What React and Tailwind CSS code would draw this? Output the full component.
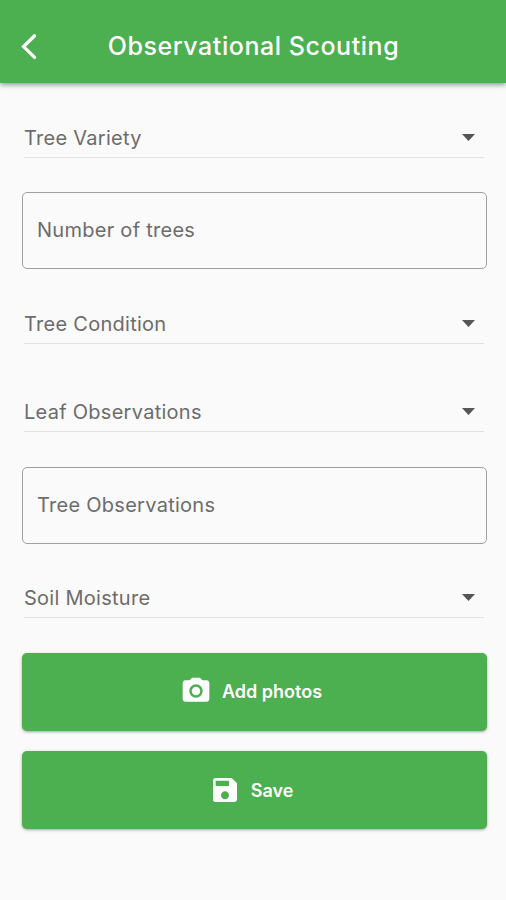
import { MdPhotoCamera, MdSave } from "react-icons/md";

function SelectField({ label, className = "" }) {
  return (
    <button
      type="button"
      className={`mr-[3px] ml-0.5 flex h-10 items-center justify-between border-b border-[#e2e2e2] pr-[9px] text-left ${className}`}
    >
      <span className="text-[20px] leading-6 tracking-[0.27px] whitespace-nowrap">{label}</span>
      <svg width="13" height="7" viewBox="0 0 13 7" className="fill-[#555555]">
        <path d="M0 0h13L6.5 7z" />
      </svg>
    </button>
  );
}

function TextField({ label, className = "" }) {
  return (
    <div
      className={`flex h-[77px] items-center rounded-[5px] border border-[#a0a0a0] px-[14px] pb-px ${className}`}
    >
      <span className="text-[20px] leading-6 tracking-[0.27px] whitespace-nowrap">{label}</span>
    </div>
  );
}

function ActionButton({ icon: Icon, label, className = "" }) {
  return (
    <button
      type="button"
      className={`flex h-[78px] items-center justify-center gap-[10px] rounded-[5px] bg-[#4caf50] pr-[7px] text-white shadow-[0_1px_3px_rgba(0,0,0,0.35)] ${className}`}
    >
      <Icon size={32} />
      <span className="text-[18px] font-semibold whitespace-nowrap">{label}</span>
    </button>
  );
}

export default function App() {
  return (
    <div className="flex h-[900px] flex-col bg-[#fafafa] font-['Inter',sans-serif] text-[#6c6c6c]">
      <header className="grid h-[83px] shrink-0 grid-cols-[82px_1fr_82px] items-center bg-[#4caf50] pt-[10px] text-white shadow-[0_2px_5px_rgba(0,0,0,0.4)]">
        <button type="button" aria-label="Back" className="pl-5">
          <svg width="18" height="28" viewBox="0 0 18 28" fill="none" stroke="currentColor" strokeWidth="3.3" strokeLinecap="round">
            <path d="M14.6 2.8 3.6 13.6 14.6 24.4" />
          </svg>
        </button>
        <h1 className="pl-px text-center text-[25px] font-medium tracking-[0.55px] whitespace-nowrap">
          Observational Scouting
        </h1>
      </header>

      <main className="flex flex-col pt-[35px] pr-[19px] pl-[22px]">
        <SelectField label="Tree Variety" />
        <TextField label="Number of trees" className="mt-[34px]" />
        <SelectField label="Tree Condition" className="mt-[35px]" />
        <SelectField label="Leaf Observations" className="mt-[48px]" />
        <TextField label="Tree Observations" className="mt-[35px]" />
        <SelectField label="Soil Moisture" className="mt-[34px]" />
        <ActionButton icon={MdPhotoCamera} label="Add photos" className="mt-[35px] pb-0.5" />
        <ActionButton icon={MdSave} label="Save" className="mt-5" />
      </main>
    </div>
  );
}
